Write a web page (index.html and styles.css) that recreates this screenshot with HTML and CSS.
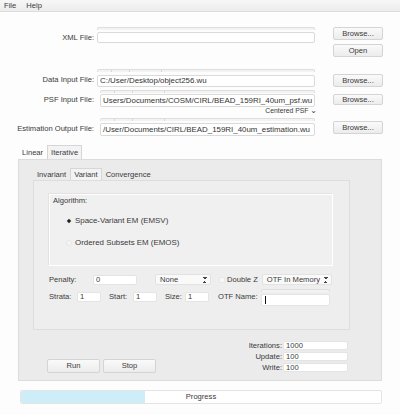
FILE: index.html
```html
<!DOCTYPE html>
<html>
<head>
<meta charset="utf-8">
<link rel="stylesheet" href="styles.css">
</head>
<body>
<div class="menubar"><span class="menu">File</span><span class="menu">Help</span></div>

<div class="files">
  <div class="row row-xml">
    <div class="label">XML File:</div>
    <div class="field">
      <div class="bar"></div>
      <div class="input"></div>
    </div>
    <div class="btns">
      <div class="btn">Browse...</div>
      <div class="btn">Open</div>
    </div>
  </div>

  <div class="row row-data">
    <div class="label">Data Input File:</div>
    <div class="field">
      <div class="bar seg"></div>
      <div class="input">C:/User/Desktop/object256.wu</div>
    </div>
    <div class="btns"><div class="btn">Browse...</div></div>
  </div>

  <div class="row row-psf">
    <div class="label">PSF Input File:</div>
    <div class="field narrow">
      <div class="bar seg"></div>
      <div class="input">Users/Documents/COSM/CIRL/BEAD_159RI_40um_psf.wu</div>
      <div class="centered">Centered PSF <span class="chev">&#8964;</span></div>
    </div>
    <div class="btns"><div class="btn">Browse...</div></div>
  </div>

  <div class="row row-est">
    <div class="label">Estimation Output File:</div>
    <div class="field narrow">
      <div class="bar seg"></div>
      <div class="input">/User/Documents/CIRL/BEAD_159RI_40um_estimation.wu</div>
    </div>
    <div class="btns"><div class="btn">Browse...</div></div>
  </div>
</div>

<div class="outer">
  <div class="tabs">
    <div class="tab">Linear</div>
    <div class="tab active">Iterative</div>
  </div>
  <div class="panel">
    <div class="tabs inner-tabs">
      <div class="tab">Invariant</div>
      <div class="tab active">Variant</div>
      <div class="tab">Convergence</div>
    </div>
    <div class="inner">
      <div class="group">
        <div class="group-title">Algorithm:</div>
        <div class="radio-row"><span class="radio on"></span>Space-Variant EM (EMSV)</div>
        <div class="radio-row"><span class="radio"></span>Ordered Subsets EM (EMOS)</div>
      </div>
      <div class="opts">
        <span class="olabel w-pen">Penalty:</span>
        <div class="tf w-0">0</div>
        <div class="select w-none">None<span class="updown"></span></div>
        <span class="check"></span><span class="olabel">Double Z</span>
        <div class="select w-otf">OTF In Memory<span class="updown"></span></div>
      </div>
      <div class="opts opts2">
        <div class="small-set">
          <span class="olabel w-strata">Strata:</span>
          <div class="tf w-s">1</div>
          <span class="olabel w-start">Start:</span>
          <div class="tf w-s">1</div>
          <span class="olabel w-size">Size:</span>
          <div class="tf w-s">1</div>
        </div>
        <span class="olabel w-otfname">OTF Name:</span>
        <div class="field otfname">
          <div class="bar"></div>
          <div class="tf w-name"><span class="caret"></span></div>
        </div>
      </div>
    </div>
    <div class="bottom">
      <div class="runstop">
        <div class="btn wide">Run</div>
        <div class="btn wide">Stop</div>
      </div>
      <div class="iters">
        <div class="irow"><span class="ilabel">Iterations:</span><div class="tf w-it">1000</div></div>
        <div class="irow"><span class="ilabel">Update:</span><div class="tf w-it">100</div></div>
        <div class="irow"><span class="ilabel">Write:</span><div class="tf w-it">100</div></div>
      </div>
    </div>
  </div>
</div>

<div class="progress">
  <div class="fill" style="width: 34.5%"></div>
  <span class="ptext">Progress</span>
</div>
</body>
</html>
```

FILE: styles.css
```css
* { box-sizing: border-box; }
html, body { margin: 0; padding: 0; }
body {
  width: 400px;
  height: 415px;
  background: #fdfdfd;
  font-family: "Liberation Sans", Arial, sans-serif;
  font-size: 7.6px;
  color: #3a3a3a;
  overflow: hidden;
}

.menubar {
  height: 12px;
  background: linear-gradient(#f7f7f7, #ececec);
  border-bottom: 1px solid #dcdcdc;
  display: flex;
  align-items: center;
  padding-left: 4px;
  gap: 10px;
  line-height: 11px;
}

.files { padding-top: 15px; }
.row { display: flex; align-items: flex-start; }
.label {
  width: 95px;
  text-align: right;
  padding-right: 1px;
  white-space: nowrap;
  line-height: 11px;
}
.field { width: 218px; margin-left: 2px; }
.field.narrow { width: 215px; margin-left: 5px; }
.bar {
  height: 3px;
  border: 1px solid #dedede;
  border-bottom: none;
  border-radius: 2px 2px 0 0;
  background: #f3f3f3;
}
.bar.seg {
  background:
    linear-gradient(90deg, transparent 13px, #d8d8d8 13px, #d8d8d8 14px, transparent 14px,
      transparent 31px, #d8d8d8 31px, #d8d8d8 32px, transparent 32px,
      transparent 63px, #d8d8d8 63px, #d8d8d8 64px, transparent 64px),
    #f3f3f3;
}
.input {
  background: #fff;
  border: 1px solid #dadada;
  border-radius: 2px;
  height: 12px;
  margin-top: 2px;
  padding-left: 2px;
  line-height: 10px;
  white-space: nowrap;
  overflow: hidden;
  font-size: 7.9px;
  color: #333;
}
.btns { margin-left: 18px; display: flex; flex-direction: column; gap: 4px; }
.btn {
  width: 50px;
  height: 13px;
  border: 1px solid #d4d4d4;
  border-radius: 2px;
  background: linear-gradient(#fafafa, #ececec);
  text-align: center;
  line-height: 11px;
}

.row-xml .label { margin-top: 5px; }
.row-xml .input { height: 11px; }

.row-data { margin-top: 12px; }
.row-data .label { margin-top: 5px; }
.row-data .input { margin-top: 3px; }
.row-data .btns { margin-top: 5px; }

.row-psf { margin-top: 3px; }
.row-psf .label { margin-top: 4px; }
.row-psf .input { margin-top: 1px; height: 13px; line-height: 11px; }
.row-psf .btns { margin-top: 4px; }
.row-psf .btn { height: 11px; line-height: 9px; }
.centered {
  text-align: right;
  font-size: 6.8px;
  line-height: 8px;
  margin-right: -2px;
}
.chev { font-size: 8px; font-family: "DejaVu Sans", sans-serif; }

.row-est { margin-top: 3px; }
.row-est .label { margin-top: 5px; }
.row-est .input { margin-top: 2px; height: 13px; line-height: 11px; }
.row-est .btns { margin-top: 3px; }

.outer { margin: 9px 18px 0 18px; }
.tabs { display: flex; align-items: flex-end; height: 14px; }
.tab {
  padding: 0 3px;
  line-height: 12px;
  height: 13px;
  border: 1px solid transparent;
  border-bottom: none;
}
.tab.active {
  background: #f3f3f3;
  border-color: #d6d6d6;
  height: 14px;
  line-height: 13px;
}
.panel {
  background: #ebebeb;
  border: 1px solid #dcdcdc;
  height: 222px;
  padding: 7px 0 0 14px;
}
.inner-tabs { height: 13px; }
.inner-tabs .tab { height: 11px; line-height: 10px; }
.inner-tabs .tab.active { height: 12px; line-height: 11px; }
.inner {
  width: 317px;
  height: 150px;
  background: #eeeeee;
  border: 1px solid #dddddd;
  padding: 13px 0 0 15px;
}
.group {
  width: 284px;
  height: 72px;
  background: #f0f0f0;
  border: 1px solid #fff;
  box-shadow: -1px -1px 0 #e2e2e2;
  padding: 1px 0 0 3px;
}
.group-title { line-height: 10px; margin-bottom: 10px; }
.radio-row {
  display: flex;
  align-items: center;
  padding-left: 13px;
  line-height: 10px;
  height: 10px;
  margin-bottom: 12px;
  font-size: 7.9px;
}
.radio {
  width: 6px; height: 6px;
  border-radius: 50%;
  margin-right: 3px;
  background: #f6f6f6;
  border: 1px solid #e6e6e6;
}
.radio.on {
  background: radial-gradient(circle, #222 0 1.5px, #f6f6f6 2px);
  border-color: #e8e8e8;
}

.opts { display: flex; align-items: center; margin-top: 8px; height: 11px; }
.opts2 { margin-top: 4px; height: 17px; align-items: flex-end; }
.small-set { display: flex; align-items: center; margin-bottom: 4px; }
.olabel { white-space: nowrap; line-height: 10px; }
.tf {
  background: #fff;
  border: 1px solid #e4e4e4;
  border-radius: 2px;
  height: 10px;
  line-height: 8px;
  padding-left: 2px;
}
.w-pen { width: 44px; }
.w-0 { width: 44px; }
.select {
  position: relative;
  margin-left: 18px;
  height: 11px;
  line-height: 9px;
  padding-left: 4px;
  background: #f9f9f9;
  border: 1px solid #e2e2e2;
  border-radius: 2px;
}
.w-none { width: 56px; }
.w-otf { width: 70px; margin-left: 4px; }
.updown {
  position: absolute;
  right: 3px;
  top: 2px;
  width: 4px;
  height: 6px;
  background:
    linear-gradient(to top right, transparent 50%, #444 50%) 0 0 / 2px 2px no-repeat,
    linear-gradient(to top left, transparent 50%, #444 50%) 2px 0 / 2px 2px no-repeat,
    linear-gradient(to bottom right, transparent 50%, #444 50%) 0 4px / 2px 2px no-repeat,
    linear-gradient(to bottom left, transparent 50%, #444 50%) 2px 4px / 2px 2px no-repeat;
}
.check {
  width: 6px; height: 6px;
  border: 1px solid #e8e8e8;
  background: #f7f7f7;
  border-radius: 1px;
  margin: 0 2px 0 8px;
}
.w-strata { width: 28px; }
.w-s { width: 24px; }
.w-start { width: 24px; margin-left: 8px; }
.w-size { width: 20px; margin-left: 8px; }
.w-otfname { width: 43px; margin-left: 9px; padding-bottom: 4px; }
.otfname { width: 69px; margin-left: 0; }
.otfname .bar { height: 3px; margin-bottom: 2px; }
.w-name { width: 69px; height: 12px; }
.caret {
  display: inline-block;
  width: 1px;
  height: 8px;
  background: #111;
  margin-top: 1px;
  margin-left: 1px;
}

.bottom {
  display: flex;
  justify-content: space-between;
  align-items: flex-start;
  padding-right: 33px;
  margin-top: 11px;
}
.runstop { display: flex; gap: 3px; margin-left: 14px; margin-top: 18px; }
.btn.wide { width: 53px; height: 14px; line-height: 12px; }
.iters { display: flex; flex-direction: column; gap: 2px; }
.irow { display: flex; align-items: center; height: 9px; }
.ilabel { text-align: right; width: 60px; padding-right: 1px; }
.w-it { width: 65px; height: 9px; line-height: 7px; }

.progress {
  position: relative;
  margin: 9px 18px 0 20px;
  height: 14px;
  border: 1px solid #e4e4e4;
  border-radius: 2px;
  background: #fff;
  display: flex;
  align-items: center;
  justify-content: center;
}
.fill {
  position: absolute;
  left: 0; top: 0; bottom: 0;
  background: #cdeef8;
  border-radius: 2px 0 0 2px;
}
.ptext { position: relative; line-height: 12px; }
```
